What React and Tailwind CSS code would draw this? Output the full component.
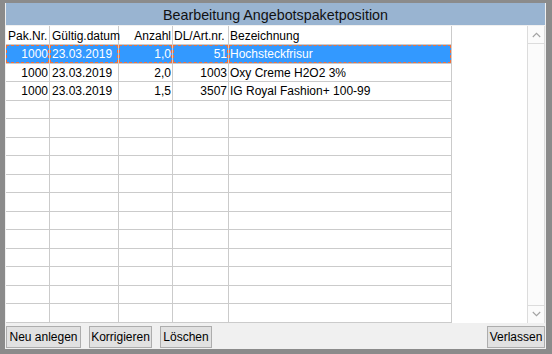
import React from "react";

const data = [
  ["1000", "23.03.2019", "1,0", "51", "Hochsteckfrisur"],
  ["1000", "23.03.2019", "2,0", "1003", "Oxy Creme H2O2 3%"],
  ["1000", "23.03.2019", "1,5", "3507", "IG Royal Fashion+ 100-99"],
];
const rows = [...data];
while (rows.length < 15) rows.push(["", "", "", "", ""]);

const colW = ["w-[44px]", "w-[69px]", "w-[54px]", "w-[56px]", "w-[223px]"];
const alignData = ["justify-end pr-[1px]", "justify-start pl-[2px]", "justify-end pr-[1px]", "justify-end pr-[1px]", "justify-start pl-[1px]"];
const alignSel = ["justify-end pr-0", "justify-start pl-[1px]", "justify-end pr-0", "justify-end pr-0", "justify-start pl-0"];
const alignHead = ["justify-start pl-[2px]", "justify-start pl-[2px]", "justify-end pr-[1px]", "justify-start pl-[1px]", "justify-start pl-[1px]"];
const headers = ["Pak.Nr.", "Gültig.datum", "Anzahl", "DL/Art.nr.", "Bezeichnung"];

function Chevron({ up }) {
  return (
    <svg width="9" height="6" viewBox="0 0 9 6" className="block">
      <path
        d={up ? "M0.8 5 L4.5 1.3 L8.2 5" : "M0.8 1 L4.5 4.7 L8.2 1"}
        fill="none"
        stroke="#a3a3a3"
        strokeWidth="1.1"
      />
    </svg>
  );
}

function Button({ w, children }) {
  return (
    <div className={`${w} h-[22px] bg-[#e1e1e1] border border-[#adadad] flex items-center justify-center text-[12px] text-black`}>
      {children}
    </div>
  );
}

export default function App() {
  return (
    <div className="w-[552px] h-[354px] bg-[#8b8b8b] pt-[3px] pl-[5px] pr-[6px] pb-[5px] [font-family:'Liberation_Sans',Arial,sans-serif]">
      <div className="h-full bg-[#f0f0f0] px-[1px] flex flex-col">
        <div className="h-[22px] bg-[#99b4d1] flex justify-center pt-[2px] leading-[20px] text-[14.3px] text-[#111]">
          Bearbeitung Angebotspaketposition
        </div>
        <div className="mt-[1px] flex bg-white h-[296.5px]">
          <div className="w-[446px] flex flex-col">
            <div className="flex h-[19px]">
              {headers.map((h, i) => (
                <div
                  key={i}
                  className={`${colW[i]} h-full border-r border-b border-[#cbcbcb] flex ${alignHead[i]} pt-[2.5px] leading-[15.5px] text-[12px] text-black whitespace-nowrap`}
                >
                  {h}
                </div>
              ))}
            </div>
            {rows.map((r, ri) => (
              <div key={ri} className="flex h-[18.5px]">
                {r.map((c, ci) =>
                  ri === 0 ? (
                    <div key={ci} className={`${colW[ci]} h-full border-r border-b border-[#cbcbcb] bg-[#3399ff]`}>
                      <div className={`h-full border border-dashed border-[#f0703c] flex ${alignSel[ci]} pt-[1px] leading-[15.5px] text-[12px] text-white whitespace-nowrap`}>
                        {c}
                      </div>
                    </div>
                  ) : (
                    <div
                      key={ci}
                      className={`${colW[ci]} h-full border-r border-b border-[#cbcbcb] flex ${alignData[ci]} pt-[2px] leading-[15.5px] text-[12px] text-black whitespace-nowrap`}
                    >
                      {c}
                    </div>
                  )
                )}
              </div>
            ))}
          </div>
          <div className="w-[75px] bg-white" />
          <div className="w-[18px] bg-[#fbfbfb] border-l border-r border-[#dcdcdc] flex flex-col justify-between">
            <div className="h-[18px] border-b border-[#dcdcdc] flex items-center justify-center">
              <Chevron up />
            </div>
            <div className="h-[18px] border-t border-[#dcdcdc] flex items-center justify-center">
              <Chevron />
            </div>
          </div>
        </div>
        <div className="mt-[3px] flex">
          <Button w="w-[75px]">Neu anlegen</Button>
          <div className="ml-[8px]">
            <Button w="w-[63px]">Korrigieren</Button>
          </div>
          <div className="ml-[8px]">
            <Button w="w-[52px]">Löschen</Button>
          </div>
          <div className="ml-auto">
            <Button w="w-[58px]">Verlassen</Button>
          </div>
        </div>
      </div>
    </div>
  );
}
